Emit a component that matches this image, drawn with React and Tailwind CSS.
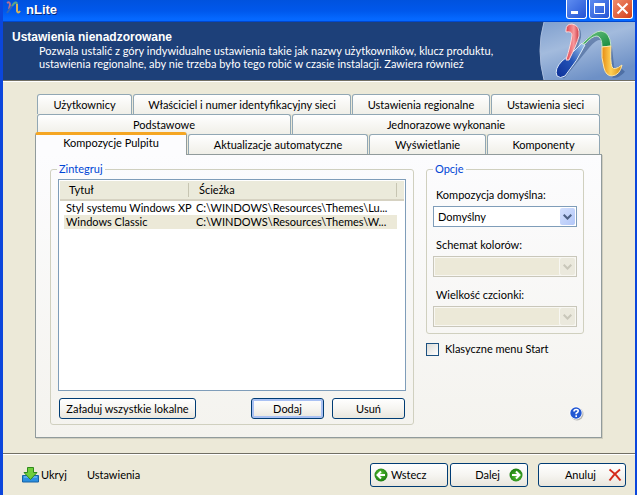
import React from "react";

const XP_BUTTON =
  "flex items-center justify-center rounded-[3px] border border-[#003c74] bg-linear-to-b from-white via-[#f6f5f1] to-[#e9e6dd] whitespace-nowrap";

function TitleButton({ label, tone, children }) {
  return (
    <button
      aria-label={label}
      className={`flex h-[19px] w-[21px] items-center justify-center rounded-b-[3px] border border-t-0 border-white ${tone}`}
    >
      <svg width="19" height="18" viewBox="0 0 19 18" fill="none" stroke="white">
        {children}
      </svg>
    </button>
  );
}

function SmallLogo() {
  return (
    <svg width="17" height="16" viewBox="0 0 17 16" fill="none" strokeWidth="2" className="shrink-0">
      <path d="M2 3 Q5 1 5 5 L4 9" stroke="#b5708f" />
      <path d="M2 13 L7 6" stroke="#3568b5" />
      <path d="M7 6 Q11 0 12 4" stroke="#57a48d" />
      <path d="M12 4 L12 11 Q13 14 15 11" stroke="#d6b35a" />
    </svg>
  );
}

function Logo() {
  return (
    <svg width="100" height="58" viewBox="0 0 100 58" fill="none" className="shrink-0">
      <defs>
        <linearGradient id="disc" x1="0" y1="0" x2="0.5" y2="1">
          <stop offset="0" stopColor="#7f9fce" />
          <stop offset="0.45" stopColor="#a3bbdd" />
          <stop offset="1" stopColor="#6d90c6" />
        </linearGradient>
        <linearGradient id="red" x1="0" y1="0" x2="1" y2="0">
          <stop offset="0" stopColor="#e0404a" />
          <stop offset="0.6" stopColor="#f79a9d" />
          <stop offset="1" stopColor="#cc3440" />
        </linearGradient>
        <linearGradient id="blue" x1="0" y1="1" x2="1" y2="0">
          <stop offset="0" stopColor="#0c2f98" />
          <stop offset="0.5" stopColor="#2453b6" />
          <stop offset="1" stopColor="#a9d0ee" />
        </linearGradient>
        <linearGradient id="green" x1="0" y1="0" x2="1" y2="1">
          <stop offset="0" stopColor="#6fc483" />
          <stop offset="1" stopColor="#148a3c" />
        </linearGradient>
        <linearGradient id="gold" x1="0" y1="0" x2="1" y2="0">
          <stop offset="0" stopColor="#e58a12" />
          <stop offset="0.45" stopColor="#ffd055" />
          <stop offset="1" stopColor="#d68a10" />
        </linearGradient>
      </defs>
      <path d="M9 0 Q1 28 9 58 H100 V0 Z" fill="url(#disc)" />
      <path d="M9 0 Q1 28 9 58" stroke="#a9bddd" />
      <g transform="translate(2 2)" stroke="#27467d" strokeOpacity="0.45" strokeWidth="8">
        <path d="M34 7 Q42 2 41 13 L34 36" strokeWidth="6" />
        <path d="M24 52 L50 20 Q66 2 71 24 L73 42 Q75 56 85 45" />
      </g>
      <path d="M22 54 Q19 47 27 39 Q38 31 47 21 L50 23 Q43 38 30 54 Q25 57 22 54 Z" fill="url(#blue)" stroke="#dbe8f7" strokeWidth="1" />
      <path d="M31 8 Q31 2 37 2 Q45 3 44 14 Q42 22 34 38 L31 38 Q36 22 37 13 Q37 9 31 10 Z" fill="url(#red)" stroke="#fbd9da" strokeWidth="1" />
      <path d="M47 22 Q59 9 66 9 Q75 10 76 24 L67 25 Q67 15 62 14 Q57 14 50 22 Z" fill="url(#green)" stroke="#c6e6cd" strokeWidth="1" />
      <path d="M67 25 L76 24 Q75 39 77 45 Q79 49 87 43 Q85 53 77 54 Q71 54 69 46 Q66 36 67 25 Z" fill="url(#gold)" stroke="#fde6a8" strokeWidth="1" />
    </svg>
  );
}

function Tab({ size, children }) {
  return (
    <button
      role="tab"
      aria-selected="false"
      className={`h-5 rounded-t-[3px] border border-b-0 border-[#91a7b4] bg-linear-to-b from-white to-[#f0efe8] whitespace-nowrap ${size}`}
    >
      {children}
    </button>
  );
}

function Combo({ id, label, value, disabled }) {
  return (
    <div className="flex flex-col gap-1">
      <label htmlFor={id} className="pl-[3px]">{label}</label>
      <div className="relative">
        <select
          id={id}
          disabled={disabled}
          className={`block h-[21px] w-full appearance-none border pl-1 text-black opacity-100 outline-none ${
            disabled
              ? "border-[#c9c7ba] bg-[#ece9d8] shadow-[inset_0_0_0_1px_#f8f7f2]"
              : "border-[#7f9db9] bg-white"
          }`}
        >
          <option>{value}</option>
        </select>
        <span
          className={`pointer-events-none absolute top-0.5 right-0.5 flex h-[17px] w-[15px] items-center justify-center rounded-[2px] ${
            disabled
              ? "bg-[#ebe9dd] text-[#c9c7ba] shadow-[0_0_0_1px_#f8f7f2]"
              : "bg-linear-to-br from-[#d3e0fd] to-[#b3c7f8] text-[#4d6185]"
          }`}
        >
          <svg width="9" height="6" viewBox="0 0 9 6" fill="none" stroke="currentColor" strokeWidth="2">
            <path d="M0.7 0.7 L4.5 4.5 L8.3 0.7" />
          </svg>
        </span>
      </div>
    </div>
  );
}

function Group({ title, className, children }) {
  return (
    <fieldset className={`min-w-0 rounded-[3px] border border-[#d0d0bf] ${className}`}>
      <legend className="px-0.5 text-[#0046d5]">{title}</legend>
      {children}
    </fieldset>
  );
}

function RoundArrow({ flip }) {
  return (
    <svg width="14" height="14" viewBox="0 0 14 14" fill="none" className={`shrink-0 ${flip ? "rotate-180" : ""}`}>
      <defs>
        <radialGradient id="ball" cx="0.45" cy="0.4" r="0.6">
          <stop offset="0" stopColor="#57c034" />
          <stop offset="1" stopColor="#1c7d10" />
        </radialGradient>
      </defs>
      <circle cx="7" cy="7" r="6.5" fill="url(#ball)" />
      <path d="M11 7 H4 M7 3.5 L3.5 7 L7 10.5" stroke="white" strokeWidth="2" />
    </svg>
  );
}

const THEMES = [
  ["Styl systemu Windows XP", "C:\\WINDOWS\\Resources\\Themes\\Lu..."],
  ["Windows Classic", "C:\\WINDOWS\\Resources\\Themes\\W..."],
];

export default function App() {
  return (
    <div className="flex min-h-screen flex-col border-r-2 border-l-[3px] border-[#0b46dc] bg-[#ece9d8] font-['Lato','Liberation_Sans',sans-serif] text-[11px] leading-[14px] text-black">
      <header className="flex h-[22px] items-start bg-linear-to-b from-[#0052de] via-[#0058ec] via-50% to-[#0568ff] to-85% pr-0.5 pl-0.5 shadow-[inset_0_-1px_0_#0048d0]">
        <SmallLogo />
        <h1 className="grow pt-0.5 pl-1 font-['Liberation_Sans',sans-serif] text-[13px] leading-4 font-bold text-white [text-shadow:1px_1px_#0a2a7a]">
          nLite
        </h1>
        <div className="flex gap-0.5">
          <TitleButton label="Minimalizuj" tone="bg-linear-to-br from-[#5e8cf0] to-[#2453d4]">
            <path d="M4 12.5 H11" strokeWidth="3" />
          </TitleButton>
          <TitleButton label="Maksymalizuj" tone="bg-linear-to-br from-[#5e8cf0] to-[#2453d4]">
            <path d="M4.5 4 V13.5 H14.5 V4" />
            <path d="M4 4.5 H15" strokeWidth="3" />
          </TitleButton>
          <TitleButton label="Zamknij" tone="bg-linear-to-br from-[#ee8c6c] to-[#d33a12]">
            <path d="M4.5 3.5 L14.5 13.5 M14.5 3.5 L4.5 13.5" strokeWidth="2" />
          </TitleButton>
        </div>
      </header>

      <section className="flex h-[60px] items-start overflow-hidden border-b border-white bg-[#1d4079] shadow-[inset_0_-1px_0_#716f64] text-white">
        <div className="min-w-0 grow pt-2 pl-[9px]">
          <h2 className="font-['Liberation_Sans',sans-serif] text-xs leading-[14px] font-bold">
            Ustawienia nienadzorowane
          </h2>
          <p className="pl-[27px] leading-[13px] whitespace-nowrap">
            Pozwala ustalić z góry indywidualne ustawienia takie jak nazwy użytkowników, klucz produktu,
            <br />
            ustawienia regionalne, aby nie trzeba było tego robić w czasie instalacji. Zawiera również
          </p>
        </div>
        <Logo />
      </section>

      <main className="pt-3 pr-[33px] pb-[15px] pl-8">
        <div role="tablist">
          <div className="flex gap-px px-0.5">
            <Tab size="grow basis-[95px]">Użytkownicy</Tab>
            <Tab size="grow basis-[218px]">Właściciel i numer identyfikacyjny sieci</Tab>
            <Tab size="grow basis-[138px]">Ustawienia regionalne</Tab>
            <Tab size="grow basis-[109px]">Ustawienia sieci</Tab>
          </div>
          <div className="flex gap-px px-0.5">
            <Tab size="grow basis-[254px]">Podstawowe</Tab>
            <Tab size="grow basis-[308px]">Jednorazowe wykonanie</Tab>
          </div>
          <div className="flex gap-px pr-0.5">
            <button
              role="tab"
              aria-selected="true"
              className="relative -mt-0.5 -mb-px h-[23px] grow basis-[152px] rounded-t-[3px] border-x border-t-[3px] border-x-[#919b9c] border-t-[#f5a623] bg-[#fcfcfe] pb-1"
            >
              Kompozycje Pulpitu
            </button>
            <Tab size="grow basis-[180px]">Aktualizacje automatyczne</Tab>
            <Tab size="grow basis-[117px]">Wyświetlanie</Tab>
            <Tab size="grow basis-[113px]">Komponenty</Tab>
          </div>
        </div>

        <div
          role="tabpanel"
          className="flex gap-3 border border-[#919b9c] bg-linear-to-b from-[#fcfcfe] to-[#f4f3ee] pt-[7px] pr-[17px] pb-3 pl-[14px] shadow-[1px_1px_0_#d0cebf]"
        >
          <Group title="Zintegruj" className="grow pr-[7px] pb-[5px] pl-[6px]">
            <div className="mt-[3px] ml-px h-[212px] border border-[#7f9db9] bg-white p-px">
              <table className="w-full table-fixed border-separate border-spacing-0 text-left">
                <colgroup>
                  <col className="w-[4px]" />
                  <col className="w-[125px]" />
                  <col />
                  <col className="w-[7px]" />
                </colgroup>
                <thead>
                  <tr className="h-5 bg-[#ebeadb]">
                    <td className="border-b-2 border-[#d6d2c2]" />
                    <th scope="col" className="border-b-2 border-[#d6d2c2] pl-[5px] font-normal">
                      <span className="block border-r border-[#c7c5b2]">Tytuł</span>
                    </th>
                    <th scope="col" className="border-b-2 border-[#d6d2c2] pl-[10px] font-normal">
                      <span className="block border-r border-[#c7c5b2]">Ścieżka</span>
                    </th>
                    <td className="border-b-2 border-[#d6d2c2]" />
                  </tr>
                </thead>
                <tbody>
                  {THEMES.map(([name, path], i) => (
                    <tr key={name} className="h-[14px] whitespace-nowrap">
                      <td />
                      <td className={`pl-0.5 ${i === 1 ? "bg-[#ece9d8]" : ""}`}>{name}</td>
                      <td className={`pl-[7px] ${i === 1 ? "bg-[#ece9d8]" : ""}`}>{path}</td>
                      <td />
                    </tr>
                  ))}
                </tbody>
              </table>
            </div>
            <div className="mt-[7px] flex gap-2 pr-px pl-0.5">
              <button className={`h-[21px] w-[137px] ${XP_BUTTON}`}>Załaduj wszystkie lokalne</button>
              <button className={`ml-auto h-[21px] w-[73px] shadow-[inset_0_0_0_2px_#a9c1f3] ${XP_BUTTON}`}>
                Dodaj
              </button>
              <button className={`h-[21px] w-[73px] ${XP_BUTTON}`}>Usuń</button>
            </div>
          </Group>

          <div className="flex w-[158px] shrink-0 flex-col">
            <Group title="Opcje" className="px-[6px] pb-[6px]">
              <div className="mt-3 flex flex-col gap-[11px]">
                <Combo id="theme" label="Kompozycja domyślna:" value="Domyślny" />
                <Combo id="scheme" label="Schemat kolorów:" value="" disabled />
                <Combo id="fontsize" label="Wielkość czcionki:" value="" disabled />
              </div>
            </Group>
            <label className="mt-2 flex items-center gap-1.5">
              <input
                type="checkbox"
                className="size-[13px] appearance-none border border-[#1c5180] bg-linear-to-br from-[#dcdcd7] to-white"
              />
              Klasyczne menu Start
            </label>
            <button aria-label="Pomoc" className="mt-auto mb-1 self-end">
              <svg width="15" height="15" viewBox="0 0 15 15">
                <circle cx="8" cy="8" r="6.5" fill="#b4b4b4" />
                <circle cx="7" cy="7" r="6.5" fill="#ffffff" />
                <circle cx="7" cy="7" r="5.7" fill="#2257d2" />
                <path d="M5 5.5 Q5 3.5 7.2 3.5 Q9.3 3.5 9.2 5.2 Q9 6.4 7.2 7.2 V8.2 M7.2 9.3 V11" fill="none" stroke="white" strokeWidth="1.6" />
              </svg>
            </button>
          </div>
        </div>
      </main>

      <footer className="flex grow items-start border-t border-[#716f64] pt-[9px] pr-[9px] pl-[19px] shadow-[inset_0_1px_0_#ffffff]">
        <button className="flex h-6 items-center gap-0.5">
          <svg width="17" height="16" viewBox="0 0 17 16">
            <path d="M0.5 8.5 H16.5 V15 H0.5 Z" fill="#2b8fe0" stroke="#1762a6" />
            <path d="M2 10 H15" stroke="#8ccbf5" />
            <path d="M5.5 0.5 H11.5 V5.5 H15 L8.5 12.5 L2 5.5 H5.5 Z" fill="#6fce3a" stroke="#2f8a1b" />
          </svg>
          Ukryj
        </button>
        <button className="ml-5 h-6">Ustawienia</button>
        <button className={`ml-auto h-6 w-[78px] ${XP_BUTTON}`}>
          <span className="flex w-full items-center gap-[3px] pl-[3px]">
            <RoundArrow />
            Wstecz
          </span>
        </button>
        <button className={`ml-0.5 h-6 w-[78px] ${XP_BUTTON}`}>
          <span className="flex w-full items-center justify-end gap-[9px] pr-1">
            Dalej
            <RoundArrow flip />
          </span>
        </button>
        <button className={`ml-[10px] h-6 w-[88px] ${XP_BUTTON}`}>
          <span className="flex w-full items-center justify-end gap-3 pr-[3px]">
            Anuluj
            <svg width="14" height="14" viewBox="0 0 14 14" fill="none" stroke="#d42a1a" strokeWidth="2">
              <path d="M1.5 1.5 Q8 6 12.5 12.5 M12 1.5 Q6 6 1.5 12.5" />
            </svg>
          </span>
        </button>
      </footer>
    </div>
  );
}
